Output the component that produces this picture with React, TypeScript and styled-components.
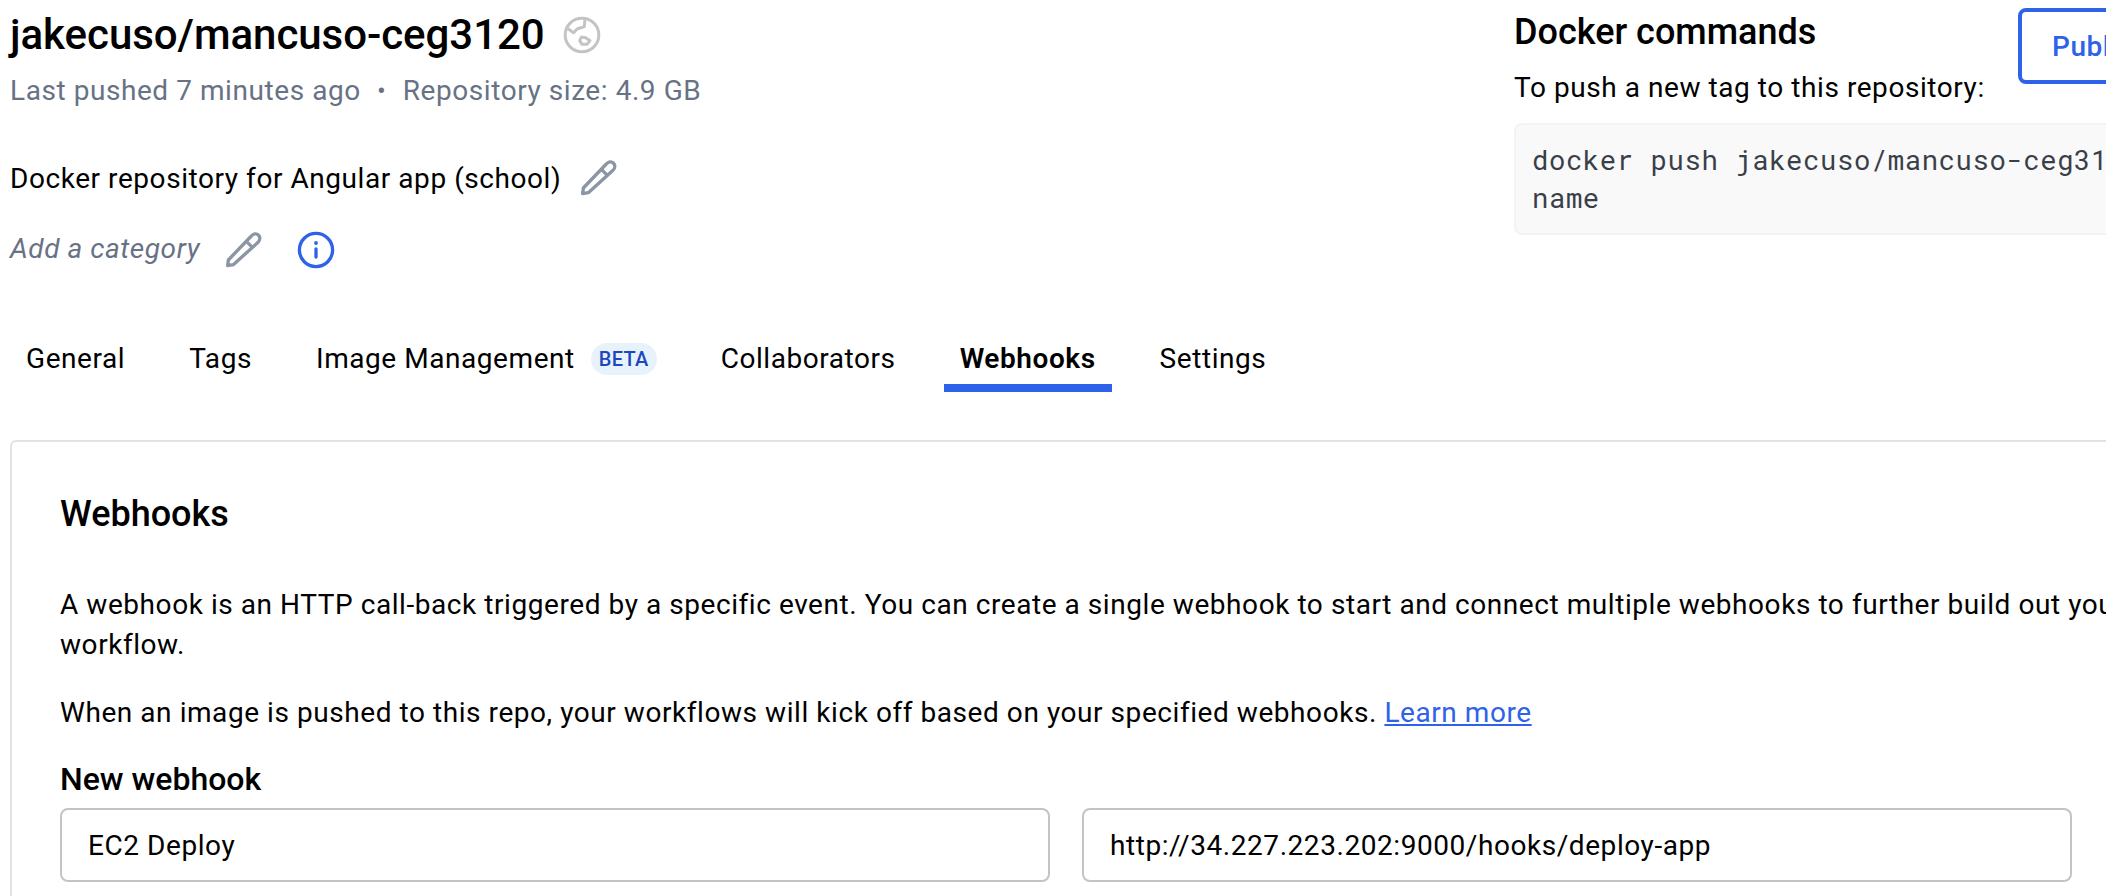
import React from "react";
import styled, { createGlobalStyle, css } from "styled-components";

const GlobalStyle = createGlobalStyle`
  * { box-sizing: border-box; }
  body {
    margin: 0;
    background: #fff;
    color: #000;
    font-family: Roboto, "Liberation Sans", sans-serif;
    font-size: 28px;
    letter-spacing: 0.56px;
    overflow: hidden;
  }
  h1, h2, h3, p { margin: 0; }
`;

const Page = styled.main`
  width: 2106px;
  height: 896px;
  overflow: hidden;
  padding-left: 10px;
`;

const Header = styled.header`
  display: flex;
  height: 326px;
`;

const Summary = styled.section`
  width: 1504px;
  flex: none;
`;

const TitleRow = styled.div`
  display: flex;
  align-items: center;
  gap: 18px;
  height: 69px;
`;

const RepoName = styled.h1`
  font-size: 42px;
  font-weight: 500;
  line-height: 68px;
  letter-spacing: -0.04px;
`;

const Meta = styled.p`
  display: flex;
  line-height: 44px;
  color: #677285;
`;

const Dot = styled.span`
  width: 42px;
  text-align: center;
  font-size: 26px;
`;

const DescriptionRow = styled.div`
  display: flex;
  align-items: center;
  gap: 19px;
  height: 40px;
  margin-top: 45px;
`;

const CategoryRow = styled.div`
  display: flex;
  align-items: center;
  height: 40px;
  margin-top: 32px;
`;

const CategoryHint = styled.span`
  width: 215px;
  padding-bottom: 3px;
  font-style: italic;
  color: #677285;
`;

const InfoSlot = styled.span`
  display: flex;
  margin-left: 34px;
`;

const Commands = styled.section`
  width: 504px;
  flex: none;
`;

const CommandsTitle = styled.h2`
  font-size: 36px;
  font-weight: 500;
  line-height: 64px;
  letter-spacing: 0;
`;

const CommandsHint = styled.p`
  padding-top: 1px;
  line-height: 46px;
`;

const CodeBlock = styled.pre`
  width: 800px;
  height: 112px;
  margin: 12px 0 0;
  padding: 15px 16px;
  border: 2px solid #f3f3f4;
  border-radius: 8px;
  background: #f9f9f9;
  color: #393f49;
  font-family: "Roboto Mono", "DejaVu Sans Mono", monospace;
  font-size: 27.3px;
  line-height: 38px;
  letter-spacing: 0.56px;
`;

const PublicButton = styled.button`
  flex: none;
  width: 220px;
  height: 76px;
  margin-top: 8px;
  padding: 0 30px;
  border: 4px solid #2e62e8;
  border-radius: 8px;
  background: #fff;
  color: #2e62e8;
  font: 500 28px Roboto, sans-serif;
  letter-spacing: 0.56px;
  text-align: left;
  white-space: nowrap;
`;

const Tabs = styled.nav`
  display: flex;
  height: 66px;
  gap: 32px;
`;

const Tab = styled.a<{ $active?: boolean }>`
  display: flex;
  align-items: center;
  flex: none;
  height: 66px;
  padding: 6px 16px 0;
  border-bottom: 8px solid transparent;
  ${(p) =>
    p.$active &&
    css`
      border-color: #2e62e8;
      font-weight: 600;
    `}
`;

const Badge = styled.span`
  margin: 2px 0 0 16px;
  padding: 0 8px;
  height: 32px;
  border-radius: 16px;
  background: #e7f2fb;
  color: #1d46c3;
  font-size: 20px;
  font-weight: 500;
  line-height: 33px;
  letter-spacing: 0.3px;
`;

const Card = styled.section`
  width: 2200px;
  height: 500px;
  margin-top: 48px;
  padding: 40px 48px;
  border: 2px solid #e1e2e6;
  border-radius: 6px;
`;

const CardTitle = styled.h2`
  padding-top: 1px;
  font-size: 36px;
  font-weight: 500;
  line-height: 63px;
  letter-spacing: 0;
`;

const Paragraph = styled.p<{ $top: number }>`
  margin-top: ${(p) => p.$top}px;
  line-height: 40px;
  white-space: nowrap;
`;

const Link = styled.a`
  color: #2e62e8;
  text-decoration: underline;
  text-decoration-thickness: 2px;
  text-underline-offset: 2px;
`;

const FormTitle = styled.h3`
  margin-top: 24px;
  font-size: 32px;
  font-weight: 500;
  line-height: 44px;
  letter-spacing: 0;
`;

const Fields = styled.div`
  display: flex;
  gap: 32px;
  margin-top: 7px;
`;

const Field = styled.input`
  width: 990px;
  height: 74px;
  padding: 0 26px;
  border: 2px solid #c4c4c6;
  border-radius: 8px;
  outline: none;
  background: #fff;
  color: #000;
  font: 400 28px Roboto, sans-serif;
  letter-spacing: 0.56px;
`;

const Pencil = () => (
  <svg width="38" height="38" viewBox="28 27 114 114" fill="none" stroke="#8b95a6" strokeWidth="10" strokeLinejoin="round">
    <path d="M36 131L38 114L107 42C113 35 122 33 128 39C134 45 134 54 127 61L53 128Z" />
    <path d="M92 58L111 77" />
  </svg>
);

const Globe = () => (
  <svg width="38" height="38" viewBox="40 36 114 114" fill="none" stroke="#c4c4c4" strokeWidth="9" strokeLinejoin="round">
    <circle cx="97" cy="93" r="50.5" />
    <path d="M52 72L72 86L82 75L104 68L106 44" />
    <path d="M95 99L108 101L121 110L112 121L97 121L90 110Z" />
  </svg>
);

const Info = () => (
  <svg width="38" height="38" viewBox="0 0 38 38" fill="none" stroke="#2e62e8" strokeWidth="3.3">
    <circle cx="19" cy="19" r="16.6" />
    <path d="M19 18V26" strokeLinecap="round" />
    <circle cx="19" cy="12" r="1.9" fill="#2e62e8" stroke="none" />
  </svg>
);

export default function App() {
  return (
    <>
      <GlobalStyle />
      <Page>
        <Header>
          <Summary>
            <TitleRow>
              <RepoName>jakecuso/mancuso-ceg3120</RepoName>
              <Globe />
            </TitleRow>
            <Meta>
              <span>Last pushed 7 minutes ago</span>
              <Dot>•</Dot>
              <span>Repository size: 4.9 GB</span>
            </Meta>
            <DescriptionRow>
              <span>Docker repository for Angular app (school)</span>
              <Pencil />
            </DescriptionRow>
            <CategoryRow>
              <CategoryHint>Add a category</CategoryHint>
              <Pencil />
              <InfoSlot>
                <Info />
              </InfoSlot>
            </CategoryRow>
          </Summary>
          <Commands>
            <CommandsTitle>Docker commands</CommandsTitle>
            <CommandsHint>To push a new tag to this repository:</CommandsHint>
            <CodeBlock>{"docker push jakecuso/mancuso-ceg3120:tag\nname"}</CodeBlock>
          </Commands>
          <PublicButton>Public view</PublicButton>
        </Header>
        <Tabs>
          <Tab>General</Tab>
          <Tab>Tags</Tab>
          <Tab>
            Image Management<Badge>BETA</Badge>
          </Tab>
          <Tab>Collaborators</Tab>
          <Tab $active>Webhooks</Tab>
          <Tab>Settings</Tab>
        </Tabs>
        <Card>
          <CardTitle>Webhooks</CardTitle>
          <Paragraph $top={39}>
            A webhook is an HTTP call-back triggered by a specific event. You can create a single webhook to start and
            connect multiple webhooks to further build out your
            <br />
            workflow.
          </Paragraph>
          <Paragraph $top={28}>
            When an image is pushed to this repo, your workflows will kick off based on your specified webhooks.{" "}
            <Link>Learn more</Link>
          </Paragraph>
          <FormTitle>New webhook</FormTitle>
          <Fields>
            <Field defaultValue="EC2 Deploy" />
            <Field defaultValue="http://34.227.223.202:9000/hooks/deploy-app" />
          </Fields>
        </Card>
      </Page>
    </>
  );
}
